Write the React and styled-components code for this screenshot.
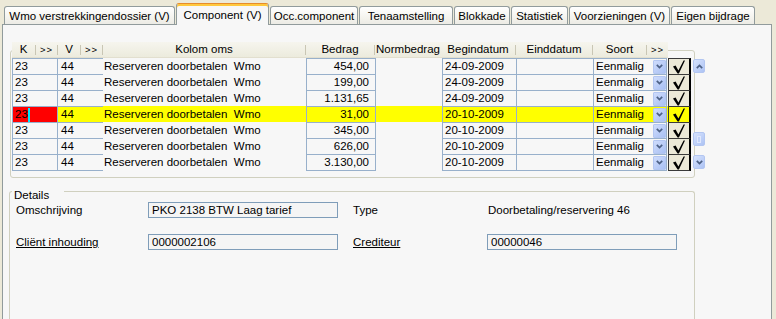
import React from "react";
import styled, { createGlobalStyle } from "styled-components";

const GlobalStyle = createGlobalStyle`
  html, body { margin: 0; padding: 0; }
  body {
    background: #ECE9D8;
    font-family: "Liberation Sans", Arial, sans-serif;
    font-size: 11.5px;
    color: #000;
    overflow: hidden;
  }
  * { box-sizing: border-box; }
`;

const Window = styled.div`
  width: 776px;
  height: 319px;
  overflow: hidden;
  display: flex;
  flex-direction: column;
`;

const TabBar = styled.div`
  display: flex;
  align-items: flex-end;
  gap: 1px;
  height: 24px;
  padding-left: 4px;
  flex-shrink: 0;
`;

const Tab = styled.div`
  position: relative;
  z-index: ${(p) => (p.$active ? 2 : 1)};
  width: ${(p) => p.$w}px;
  height: ${(p) => (p.$active ? 22 : 18)}px;
  margin-bottom: ${(p) => (p.$active ? -1 : 0)}px;
  display: flex;
  align-items: center;
  justify-content: center;
  white-space: nowrap;
  border: 1px solid #919b9c;
  border-bottom: none;
  border-radius: 3px 3px 0 0;
  border-top-color: ${(p) => (p.$active ? "#E68B2C" : "#919b9c")};
  box-shadow: ${(p) => (p.$active ? "inset 0 2px 0 #FFC83C" : "none")};
  background: ${(p) =>
    p.$active ? "#F7F7F7" : "linear-gradient(#FFFFFF, #F3F2EC 70%, #ECEBE5)"};
`;

const Panel = styled.div`
  flex: 1;
  min-height: 0;
  margin: 0 4px 0 2px;
  border: 1px solid #919b9c;
  border-bottom: none;
  background: #f7f7f7;
  padding-top: 25px;
  display: flex;
  flex-direction: column;
`;

const GridGroup = styled.div`
  margin-left: 7px;
  width: 685px;
  height: 128px;
  flex-shrink: 0;
  border: 1px solid #d0d0bf;
  border-radius: 3px;
  padding-left: 1px;
`;

const GridBlock = styled.div`
  margin-top: -9px;
`;

const Header = styled.div`
  display: flex;
  align-items: center;
  width: 656px;
  height: 16px;
  background: linear-gradient(#f6f5ee, #ecebdd);
  border-bottom: 1px solid #e2dfcf;
`;

const HeadCell = styled.div`
  width: ${(p) => p.$w}px;
  flex-shrink: 0;
  text-align: center;
  white-space: nowrap;
  line-height: 15px;
  font-size: ${(p) => (p.$small ? "9.5px" : "inherit")};
  letter-spacing: ${(p) => (p.$small ? "1px" : "normal")};
`;

const HeadSep = styled.div`
  width: 1px;
  height: 10px;
  flex-shrink: 0;
  background: #c9c6b4;
`;

const Body = styled.div`
  display: flex;
  gap: 2px;
`;

const Rows = styled.div`
  display: flex;
  flex-direction: column;
  width: 679px;
  flex-shrink: 0;
`;

const Row = styled.div`
  display: grid;
  grid-template-columns: 45px 46px 203px 70px 66px 75px 77px 73px 1px 23px;
  grid-template-rows: 16px;
  height: 16px;
  background: ${(p) => (p.$hl ? "#FFFF00" : "transparent")};
`;

const Box = styled.div`
  height: 17px;
  border: 1px solid #98b0cb;
  ${(p) => p.$noLeft && "border-left: none;"}
  ${(p) => p.$noRight && "border-right: none;"}
  padding: 0 ${(p) => p.$pr || 0}px 0 ${(p) => p.$pl || 0}px;
  line-height: 15px;
  white-space: pre;
  background: ${(p) => p.$bg || "transparent"};
  display: flex;
  align-items: center;
  justify-content: ${(p) => (p.$align === "right" ? "flex-end" : "flex-start")};
`;

const Plain = styled.div`
  line-height: 16px;
  padding-left: 1px;
  white-space: pre;
`;

const Caret = styled.span`
  display: inline-block;
  width: 2px;
  height: 14px;
  background: #00e5ff;
`;

const DropBtn = styled.div`
  width: 13px;
  height: 14px;
  margin-left: auto;
  border: 1px solid #b3c6f1;
  border-radius: 1px;
  background: linear-gradient(135deg, #cfdcfc, #a9c0f3);
  display: flex;
  align-items: center;
  justify-content: center;
`;

const CheckBtn = styled.div`
  height: 17px;
  border: 1px solid #3a3a3a;
  border-right: 2px solid #000;
  background: ${(p) => (p.$hl ? "#FFFF00" : "#ECE9D8")};
  display: flex;
  align-items: center;
  justify-content: center;
`;

const ScrollBar = styled.div`
  width: 12px;
  flex-shrink: 0;
  display: grid;
  grid-template-rows: 14px 1fr 14px 9px 14px;
  padding: 1px 0;
  height: 112px;
`;

const ScrollBtn = styled.div`
  grid-row: ${(p) => p.$row};
  border: 1px solid #b3c6f1;
  border-radius: 2px;
  background: linear-gradient(135deg, #d6e2fd, #adc3f4);
  display: flex;
  align-items: center;
  justify-content: center;
`;

const Grip = styled.div`
  width: 4px;
  height: 7px;
  border: 1px solid #e0e8fd;
  background: #bfd0f8;
`;

const Details = styled.div`
  margin: 13px 0 0 6px;
  width: 686px;
  flex: 1;
  border: 1px solid #d0d0bf;
  border-bottom: none;
  border-radius: 3px 3px 0 0;
  padding-left: 6px;
  display: flex;
  flex-direction: column;
`;

const GroupTitle = styled.div`
  align-self: flex-start;
  margin: -3px 0 0 -4px;
  padding: 0 15px 0 2px;
  height: 13px;
  line-height: 13px;
  background: #f7f7f7;
`;

const FieldGrid = styled.div`
  display: grid;
  grid-template-columns: 132px 205px 134px 190px;
  grid-auto-rows: 16px;
  row-gap: 16px;
  align-items: center;
`;

const Label = styled.div`
  line-height: 16px;
  white-space: nowrap;
  text-decoration: ${(p) => (p.$link ? "underline" : "none")};
`;

const Value = styled.div`
  line-height: 16px;
  padding-left: 1px;
  white-space: nowrap;
`;

const Input = styled.div`
  width: 190px;
  height: 16px;
  border: 1px solid #7f9db9;
  background: #f5f5f5;
  padding-left: 3px;
  line-height: 14px;
  white-space: nowrap;
`;

const Chevron = ({ dir = "down" }) => (
  <svg width="7" height="5" viewBox="0 0 7 5">
    <path
      d={dir === "down" ? "M0.8 0.8 L3.5 3.6 L6.2 0.8" : "M0.8 4.2 L3.5 1.4 L6.2 4.2"}
      fill="none"
      stroke="#4D6185"
      strokeWidth="1.7"
    />
  </svg>
);

const CheckMark = () => (
  <svg width="14" height="14" viewBox="0 0 14 14">
    <path d="M1 6.6 L3.6 5.6 L6.4 10.6 L11.6 0.6 L13 0.6 L6.9 13.4 L5.6 13.4 Z" fill="#000" />
  </svg>
);

const tabs = [
  { label: "Wmo verstrekkingendossier (V)", w: 171 },
  { label: "Component (V)", w: 93, active: true },
  { label: "Occ.component", w: 88 },
  { label: "Tenaamstelling", w: 94 },
  { label: "Blokkade", w: 56 },
  { label: "Statistiek", w: 57 },
  { label: "Voorzieningen (V)", w: 101 },
  { label: "Eigen bijdrage", w: 84 },
];

const headers = [
  { t: "K", w: 23 },
  { t: ">>", w: 21, small: true },
  { t: "V", w: 22 },
  { t: ">>", w: 21, small: true },
  { t: "Kolom oms", w: 202 },
  { t: "Bedrag", w: 68 },
  { t: "Normbedrag", w: 66, noSep: true },
  { t: "Begindatum", w: 74 },
  { t: "Einddatum", w: 76 },
  { t: "Soort", w: 53 },
  { t: ">>", w: 21, small: true, last: true },
];

const rows = [
  { amount: "454,00", date: "24-09-2009" },
  { amount: "199,00", date: "24-09-2009" },
  { amount: "1.131,65", date: "24-09-2009" },
  { amount: "31,00", date: "20-10-2009", hl: true },
  { amount: "345,00", date: "20-10-2009" },
  { amount: "626,00", date: "20-10-2009" },
  { amount: "3.130,00", date: "20-10-2009" },
];

export default function App() {
  return (
    <Window>
      <GlobalStyle />
      <TabBar>
        {tabs.map((t) => (
          <Tab key={t.label} $w={t.w} $active={t.active}>
            {t.label}
          </Tab>
        ))}
      </TabBar>
      <Panel>
        <GridGroup>
          <GridBlock>
            <Header>
              {headers.map((h, i) => (
                <React.Fragment key={i}>
                  <HeadCell $w={h.w} $small={h.small}>
                    {h.t}
                  </HeadCell>
                  {!h.noSep && !h.last && <HeadSep />}
                </React.Fragment>
              ))}
            </Header>
            <Body>
              <Rows>
                {rows.map((r, i) => (
                  <Row key={i} $hl={r.hl}>
                    <Box $noRight $pl={2} $bg={r.hl ? "#FF0000" : undefined}>
                      23{r.hl && <Caret />}
                    </Box>
                    <Box $noRight $pl={3}>44</Box>
                    <Plain>{"Reserveren doorbetalen  Wmo"}</Plain>
                    <Box $align="right" $pr={6}>{r.amount}</Box>
                    <div />
                    <Box $pl={2}>{r.date}</Box>
                    <Box $noLeft />
                    <Box $noLeft $pl={2}>
                      Eenmalig
                      <DropBtn>
                        <Chevron />
                      </DropBtn>
                    </Box>
                    <div />
                    <CheckBtn $hl={r.hl}>
                      <CheckMark />
                    </CheckBtn>
                  </Row>
                ))}
              </Rows>
              <ScrollBar>
                <ScrollBtn $row={1}>
                  <Chevron dir="up" />
                </ScrollBtn>
                <ScrollBtn $row={3}>
                  <Grip />
                </ScrollBtn>
                <ScrollBtn $row={5}>
                  <Chevron />
                </ScrollBtn>
              </ScrollBar>
            </Body>
          </GridBlock>
        </GridGroup>
        <Details>
          <GroupTitle>Details</GroupTitle>
          <FieldGrid>
            <Label>Omschrijving</Label>
            <Input>PKO 2138 BTW Laag tarief</Input>
            <Label>Type</Label>
            <Value>Doorbetaling/reservering 46</Value>
            <Label $link>Cliënt inhouding</Label>
            <Input>0000002106</Input>
            <Label $link>Crediteur</Label>
            <Input>00000046</Input>
          </FieldGrid>
        </Details>
      </Panel>
    </Window>
  );
}
